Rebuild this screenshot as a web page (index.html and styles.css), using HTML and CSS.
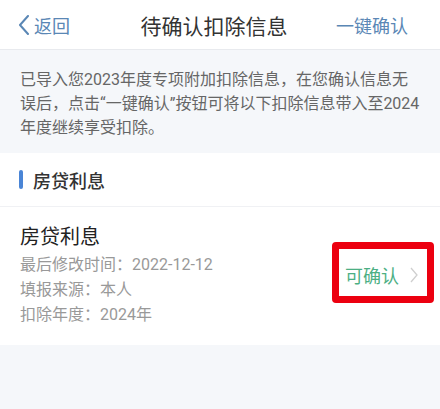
FILE: index.html
```html
<!DOCTYPE html>
<html lang="zh-CN">
<head>
    <meta charset="UTF-8">
    <meta name="viewport" content="width=device-width, initial-scale=1.0">
    <title>待确认扣除信息</title>
    <link rel="stylesheet" href="styles.css">
</head>
<body>
    <header class="nav-bar">
        <a class="nav-back" href="#">
            <svg width="12" height="20" viewBox="0 0 12 20"><polyline points="10,1 2,10 10,19" fill="none" stroke="#5a87b5" stroke-width="2" stroke-linecap="round" stroke-linejoin="round"/></svg>
            <span>返回</span>
        </a>
        <h1 class="nav-title">待确认扣除信息</h1>
        <a class="nav-action" href="#">一键确认</a>
    </header>

    <p class="notice">已导入您2023年度专项附加扣除信息，在您确认信息无误后，点击“一键确认”按钮可将以下扣除信息带入至2024年度继续享受扣除。</p>

    <section class="deduct-group">
        <h2 class="group-title">房贷利息</h2>
        <div class="deduct-item">
            <div class="item-info">
                <h3>房贷利息</h3>
                <p>最后修改时间：2022-12-12</p>
                <p>填报来源：本人</p>
                <p>扣除年度：2024年</p>
            </div>
            <div class="item-status">
                <span>可确认</span>
                <svg width="8" height="16" viewBox="0 0 8 16"><polyline points="1,1 7,8 1,15" fill="none" stroke="#cfcfcf" stroke-width="1.3"/></svg>
                <div class="highlight"></div>
            </div>
        </div>
    </section>
</body>
</html>
```

FILE: styles.css
```css
body {
    margin: 0;
    font-family: Roboto, "Noto Sans CJK SC", sans-serif;
    background-color: #f5f7fa;
    color: #333;
}
a {
    text-decoration: none;
}
.nav-bar {
    display: flex;
    align-items: center;
    justify-content: space-between;
    height: 49px;
    padding: 0 32px 0 18px;
    background: #fff;
    border-bottom: 1px solid #e8eaee;
}
.nav-back {
    display: flex;
    align-items: center;
    gap: 4px;
    color: #5a87b5;
    font-size: 18px;
}
.nav-title {
    margin: 0 0 0 22px;
    font-size: 21px;
    font-weight: normal;
    color: #333;
}
.nav-action {
    color: #5a87b5;
    font-size: 18px;
}
.notice {
    margin: 0;
    padding: 18px 20px 13px;
    font-size: 16px;
    line-height: 24px;
    color: #666;
}
.deduct-group {
    background: #fff;
}
.group-title {
    display: flex;
    align-items: center;
    gap: 10px;
    height: 53px;
    margin: 0;
    padding: 0 19px;
    font-size: 18px;
    font-weight: 500;
    color: #333;
    border-bottom: 1px solid #f0f1f4;
}
.group-title::before {
    content: "";
    width: 4px;
    height: 19px;
    border-radius: 2px;
    background: #4a85d6;
}
.deduct-item {
    display: flex;
    align-items: center;
    justify-content: space-between;
    padding: 16px 22px 18px 20px;
}
.item-info h3 {
    margin: 0 0 1px;
    font-size: 20px;
    font-weight: normal;
    line-height: 28px;
    color: #222;
}
.item-info p {
    margin: 0;
    font-size: 16px;
    line-height: 25px;
    color: #999;
}
.item-status {
    position: relative;
    display: flex;
    align-items: center;
    gap: 11px;
    color: #4caf84;
    font-size: 18px;
}
.highlight {
    position: absolute;
    left: -13px;
    right: -16px;
    top: -20px;
    bottom: -15px;
    border: 7px solid #ec0010;
    border-radius: 4px;
}
```
